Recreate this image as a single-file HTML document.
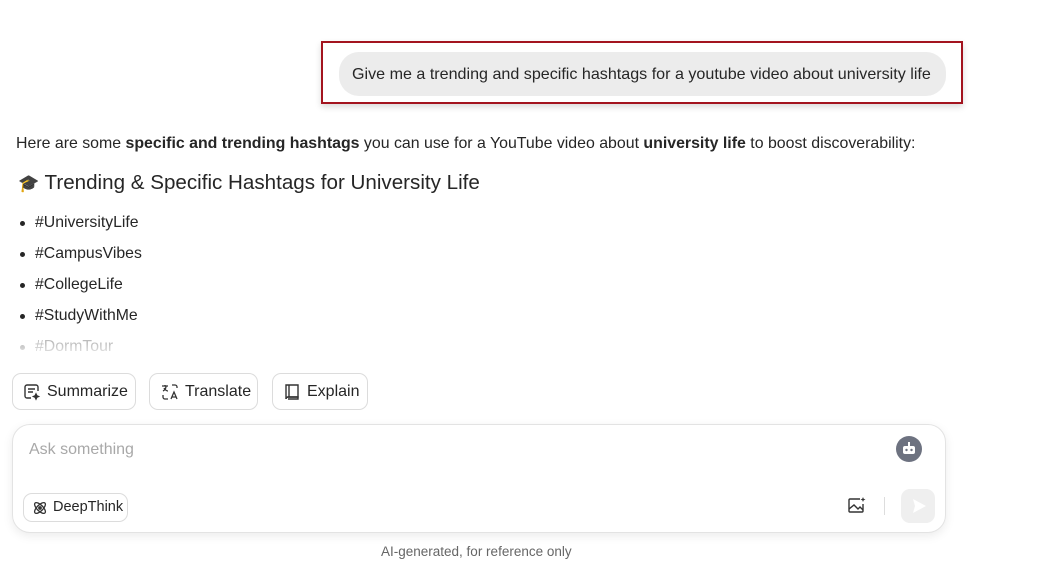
<!DOCTYPE html>
<html><head><meta charset="utf-8"><style>
body{margin:0;width:1046px;height:567px;overflow:hidden;background:#fff;font-family:"Liberation Sans",sans-serif;color:#222;position:relative}
.a{position:absolute}
.red{left:321px;top:41px;width:638px;height:59px;border:2px solid #a3141f;box-shadow:0 3px 6px rgba(0,0,0,.15)}
.bub{left:339px;top:52px;width:607px;height:44px;border-radius:20px;background:#ececec;font-size:16.1px;line-height:44px;text-indent:13px;color:#262626;white-space:nowrap}
.p{left:16px;top:135px;font-size:15.9px;white-space:nowrap;color:#262626}
.h{left:18px;top:171px;font-size:20.6px;white-space:nowrap;color:#262626}
.li{left:20px;font-size:15.8px;color:#262626}
.li:before{content:"";position:absolute;left:0;top:7px;width:5px;height:5px;border-radius:50%;background:#262626}
.li span{margin-left:15px}
.btn{top:373px;border:1px solid #dcdcdc;border-radius:9px;font-size:16px;line-height:35px;color:#262626;box-sizing:border-box;height:37px;white-space:nowrap}
.btn svg{position:absolute;left:10px;top:9px}
.box{left:12px;top:424px;width:934px;height:109px;border:1px solid #e3e3e3;border-radius:18px;box-sizing:border-box;box-shadow:0 3px 10px rgba(0,0,0,.08)}
</style></head><body>
<div class="a red"></div>
<div class="a bub">Give me a trending and specific hashtags for a youtube video about university life</div>
<div class="a p">Here are some <b>specific and trending hashtags</b> you can use for a YouTube video about <b>university life</b> to boost discoverability:</div>
<div class="a h"><span style="font-size:17px">🎓</span> Trending &amp; Specific Hashtags for University Life</div>
<div class="a li" style="top:214px"><span>#UniversityLife</span></div>
<div class="a li" style="top:245px"><span>#CampusVibes</span></div>
<div class="a li" style="top:276px"><span>#CollegeLife</span></div>
<div class="a li" style="top:307px"><span>#StudyWithMe</span></div>
<div class="a li" style="top:338px;opacity:.3"><span>#DormTour</span></div>
<div class="a" style="left:0;top:342px;width:600px;height:20px;background:linear-gradient(rgba(255,255,255,0),#fff)"></div>
<div class="a btn" style="left:12px;width:124px;padding-left:34px">
<svg width="18" height="18" viewBox="0 0 18 18" fill="none" stroke="#333" stroke-width="1.4"><path d="M8 15H4a2 2 0 0 1-2-2V4a2 2 0 0 1 2-2h9a2 2 0 0 1 2 2v4"/><path d="M5 6h7M5 9h5"/><path d="M13 11l.8 1.7 1.7.8-1.7.8-.8 1.7-.8-1.7-1.7-.8 1.7-.8z" fill="#333"/></svg>Summarize</div>
<div class="a btn" style="left:149px;width:109px;padding-left:35px">
<svg width="20" height="18" viewBox="0 0 20 18" fill="none" stroke="#333" stroke-width="1.3"><path d="M2 3h6M5 2v1M3 8c2-1 3-3 3-5M4 5c1 2 3 3 4 3"/><path d="M12 2h3a2 2 0 0 1 2 2v1M8 16H5a2 2 0 0 1-2-2v-2"/><path d="M11 16l3-7 3 7M12 14h4"/></svg>Translate</div>
<div class="a btn" style="left:272px;width:96px;padding-left:34px">
<svg width="18" height="18" viewBox="0 0 18 18" fill="none" stroke="#333" stroke-width="1.4"><path d="M3 2h12v12H5a2 2 0 0 0-2 2z"/><path d="M3 16a2 2 0 0 1 2-2h10v2H5M6 2v12"/></svg>Explain</div>
<div class="a box"></div>
<div class="a" style="left:29px;top:441px;font-size:16px;color:#a8a8a8">Ask something</div>
<div class="a" style="left:896px;top:436px;width:26px;height:26px;border-radius:50%;background:#6d7280">
<svg width="26" height="26" viewBox="0 0 26 26"><rect x="7" y="10" width="12" height="8" rx="2" fill="#fff"/><rect x="12" y="6" width="2" height="4" fill="#fff"/><circle cx="10.5" cy="14" r="1.2" fill="#6d7280"/><circle cx="15.5" cy="14" r="1.2" fill="#6d7280"/></svg></div>
<div class="a" style="left:23px;top:493px;width:105px;height:29px;border:1px solid #dcdcdc;border-radius:9px;box-sizing:border-box;font-size:14.5px;line-height:27px;padding-left:29px;color:#262626;white-space:nowrap">
<svg class="a" style="left:8px;top:6px" width="16" height="16" viewBox="0 0 16 16" fill="none" stroke="#333" stroke-width="1.3"><ellipse cx="8" cy="8" rx="7" ry="3" transform="rotate(45 8 8)"/><ellipse cx="8" cy="8" rx="7" ry="3" transform="rotate(-45 8 8)"/><circle cx="8" cy="8" r="1.2" fill="#333"/></svg>DeepThink</div>
<svg class="a" style="left:847px;top:496px" width="20" height="18" viewBox="0 0 20 18" fill="none" stroke="#333" stroke-width="1.4"><path d="M13 3H3a1 1 0 0 0-1 1v11a1 1 0 0 0 1 1h12a1 1 0 0 0 1-1V8"/><path d="M2 13l5-4 4 4 2-2 3 3"/><path d="M16 1l.7 1.8 1.8.7-1.8.7-.7 1.8-.7-1.8-1.8-.7 1.8-.7z" fill="#333" stroke="none"/></svg>
<div class="a" style="left:884px;top:497px;width:1px;height:18px;background:#ddd"></div>
<div class="a" style="left:901px;top:489px;width:34px;height:34px;border-radius:9px;background:#efefef">
<svg width="34" height="34" viewBox="0 0 34 34"><path d="M12 10l13 7-13 7 2-7z" fill="#fff"/></svg></div>
<div class="a" style="left:381px;top:544px;font-size:13.5px;color:#666">AI-generated, for reference only</div>
</body></html>
